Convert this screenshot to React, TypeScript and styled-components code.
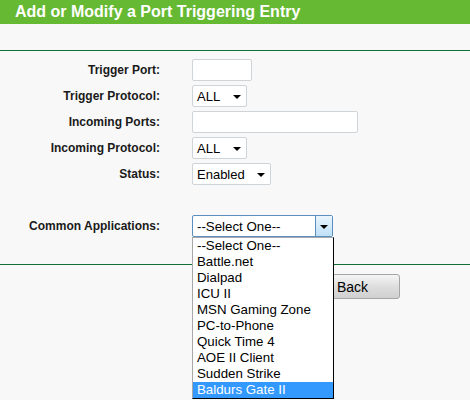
import React from "react";
import styled, { createGlobalStyle } from "styled-components";

const GlobalStyle = createGlobalStyle`
  body {
    margin: 0;
    background-color: #f8f8f8;
    font-family: "Liberation Sans", Arial, sans-serif;
  }
`;

const Page = styled.div`
  width: 470px;
  height: 400px;
  overflow: hidden;
`;

const TitleBar = styled.div`
  height: 24px;
  line-height: 24px;
  padding-left: 15px;
  background-color: #66b933;
  color: #fff;
  font-size: 16px;
  font-weight: bold;
`;

const Divider = styled.div<{ $top: number }>`
  height: 1px;
  margin-top: ${(p) => p.$top}px;
  background-color: #11703a;
`;

const Form = styled.div`
  display: grid;
  grid-template-columns: 160px 1fr;
  grid-auto-rows: 22px;
  column-gap: 32px;
  row-gap: 4px;
  padding-top: 8px;
`;

const Label = styled.div`
  align-self: center;
  text-align: right;
  font-size: 12px;
  font-weight: bold;
  color: #1a1a1a;
`;

const Cell = styled.div`
  position: relative;
  display: flex;
  align-items: stretch;
`;

const TextBox = styled.div<{ $width: number }>`
  box-sizing: border-box;
  width: ${(p) => p.$width}px;
  border: 1px solid #cfd4d8;
  border-radius: 2px;
  background-color: #fff;
`;

const SelectBox = styled.div<{ $width: number }>`
  box-sizing: border-box;
  width: ${(p) => p.$width}px;
  display: flex;
  align-items: center;
  justify-content: space-between;
  padding: 0 5px 0 4px;
  border: 1px solid #cfd4d8;
  border-radius: 2px;
  background-color: #fff;
  font-size: 13px;
  color: #000;
`;

const Arrow = styled.span`
  width: 0;
  height: 0;
  margin-top: 1px;
  border-left: 4px solid transparent;
  border-right: 4px solid transparent;
  border-top: 4px solid #000;
`;

const OpenSelect = styled.div<{ $width: number }>`
  box-sizing: border-box;
  width: ${(p) => p.$width}px;
  display: flex;
  align-items: stretch;
  border: 1px solid #5b8fbf;
  border-radius: 2px;
  background-color: #fff;
  font-size: 13.3px;
  color: #000;
`;

const OpenValue = styled.span`
  flex: 1;
  align-self: center;
  padding-left: 4px;
`;

const ArrowButton = styled.span`
  width: 16px;
  display: flex;
  align-items: center;
  justify-content: center;
  border-left: 1px solid #5b8fbf;
  background: linear-gradient(#eaf5fd, #bfe0f6);
`;

const DropList = styled.ul`
  position: absolute;
  top: 100%;
  left: 0;
  z-index: 2;
  box-sizing: border-box;
  width: 142px;
  margin: 0;
  padding: 0;
  list-style: none;
  border: 1px solid #000;
  border-left-color: #a8a8a8;
  border-top-color: #a8a8a8;
  background-color: #fff;
  font-size: 13.3px;
`;

const DropItem = styled.li<{ $active?: boolean }>`
  height: 16px;
  line-height: 16px;
  padding-left: 4px;
  white-space: nowrap;
  color: ${(p) => (p.$active ? "#fff" : "#000")};
  background-color: ${(p) => (p.$active ? "#3399ff" : "transparent")};
`;

const ButtonRow = styled.div`
  display: flex;
  gap: 8px;
  padding: 9px 0 0 256px;
`;

const Button = styled.button`
  box-sizing: border-box;
  width: 68px;
  height: 25px;
  padding: 0 0 0 4px;
  text-align: left;
  border: 1px solid #a5a5a5;
  border-radius: 3px;
  background: linear-gradient(#f6f6f6, #dedede 50%, #d0d0d0);
  font-family: "Liberation Sans", Arial, sans-serif;
  font-size: 14px;
  color: #000;
`;

const applications = [
  "--Select One--",
  "Battle.net",
  "Dialpad",
  "ICU II",
  "MSN Gaming Zone",
  "PC-to-Phone",
  "Quick Time 4",
  "AOE II Client",
  "Sudden Strike",
  "Baldurs Gate II",
];

const Select: React.FC<{ value: string; width: number }> = ({ value, width }) => (
  <SelectBox $width={width}>
    <span>{value}</span>
    <Arrow />
  </SelectBox>
);

const App: React.FC = () => (
  <Page>
    <GlobalStyle />
    <TitleBar>Add or Modify a Port Triggering Entry</TitleBar>
    <Divider $top={26} />
    <Form>
      <Label>Trigger Port:</Label>
      <Cell>
        <TextBox $width={60} />
      </Cell>

      <Label>Trigger Protocol:</Label>
      <Cell>
        <Select value="ALL" width={55} />
      </Cell>

      <Label>Incoming Ports:</Label>
      <Cell>
        <TextBox $width={166} />
      </Cell>

      <Label>Incoming Protocol:</Label>
      <Cell>
        <Select value="ALL" width={55} />
      </Cell>

      <Label>Status:</Label>
      <Cell>
        <Select value="Enabled" width={79} />
      </Cell>

      <Label />
      <Cell />

      <Label>Common Applications:</Label>
      <Cell>
        <OpenSelect $width={141}>
          <OpenValue>--Select One--</OpenValue>
          <ArrowButton>
            <Arrow />
          </ArrowButton>
        </OpenSelect>
        <DropList>
          {applications.map((name, i) => (
            <DropItem key={name} $active={i === applications.length - 1}>
              {name}
            </DropItem>
          ))}
        </DropList>
      </Cell>
    </Form>
    <Divider $top={27} />
    <ButtonRow>
      <Button type="button">Save</Button>
      <Button type="button">Back</Button>
    </ButtonRow>
  </Page>
);

export default App;
